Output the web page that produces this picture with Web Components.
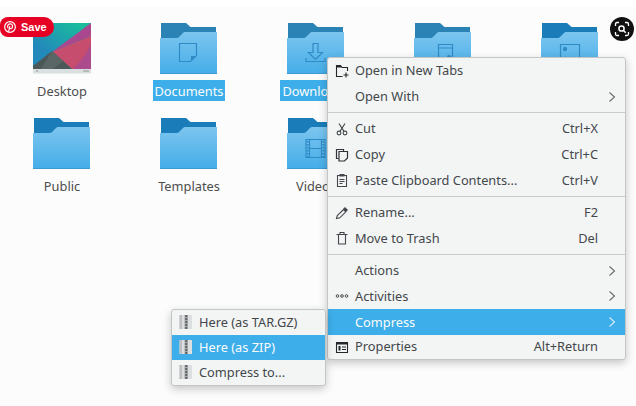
<!DOCTYPE html>
<html>
<head>
<meta charset="utf-8">
<style>
  html, body { margin: 0; width: 636px; height: 406px; overflow: hidden; background: #fff; }
</style>
</head>
<body>
<dolphin-view>
  <folder-item label="Desktop" kind="wallpaper"></folder-item>
  <folder-item label="Documents" kind="documents" selected></folder-item>
  <folder-item label="Downloads" kind="downloads" selected></folder-item>
  <folder-item label="Music" kind="music"></folder-item>
  <folder-item label="Pictures" kind="pictures" deep></folder-item>
  <folder-item label="Public" deep></folder-item>
  <folder-item label="Templates" deep></folder-item>
  <folder-item label="Videos" kind="videos" deep></folder-item>

  <pin-save slot="over"></pin-save>
  <lens-button slot="over"></lens-button>

  <popup-menu slot="over" style="left:327px;top:57px;width:299px;--row-h:25.800px;--last-h:23.500px">
    <menu-item icon="newtabs">Open in New Tabs</menu-item>
    <menu-item arrow>Open With</menu-item>
    <menu-sep></menu-sep>
    <menu-item icon="cut" keys="Ctrl+X">Cut</menu-item>
    <menu-item icon="copy" keys="Ctrl+C">Copy</menu-item>
    <menu-item icon="paste" keys="Ctrl+V">Paste Clipboard Contents...</menu-item>
    <menu-sep></menu-sep>
    <menu-item icon="rename" keys="F2">Rename...</menu-item>
    <menu-item icon="trash" keys="Del">Move to Trash</menu-item>
    <menu-sep></menu-sep>
    <menu-item arrow>Actions</menu-item>
    <menu-item icon="dots" arrow>Activities</menu-item>
    <menu-item arrow active>Compress</menu-item>
    <menu-item icon="props" keys="Alt+Return">Properties</menu-item>
  </popup-menu>

  <popup-menu slot="over" style="left:171px;top:308.500px;width:155px;--row-h:25px;--last-h:25px">
    <menu-item icon="zip">Here (as TAR.GZ)</menu-item>
    <menu-item icon="zip" active>Here (as ZIP)</menu-item>
    <menu-item icon="zip">Compress to...</menu-item>
  </popup-menu>
</dolphin-view>

<script>
// symbols drawn on the folder front, in folder coordinates
const M = '#2f8bc5';
const FOLDER_MARKS = {
  documents: `<path d="M19.500 21.500h17v12l-6 6h-11z" fill="none" stroke="${M}" stroke-width="1.200"/><path d="M31 39.500l5.500-5.500H31z" fill="${M}"/>`,
  downloads: `<path d="M26 21.500h5v9h4.500l-7 7-7-7H26z" fill="none" stroke="${M}" stroke-width="1.200"/><path d="M19 36v3.500h19V36" fill="none" stroke="${M}" stroke-width="1.200"/>`,
  music: `<path d="M24.500 22.500h14v20h-14z M24.500 26h14" fill="none" stroke="${M}" stroke-width="1.200"/><circle cx="35" cy="35" r="2" fill="${M}"/>`,
  pictures: `<path d="M19.500 22.500h19v20h-19z" fill="none" stroke="${M}" stroke-width="1.200"/><circle cx="24" cy="27" r="2.200" fill="${M}"/><circle cx="25" cy="36" r="1.200" fill="${M}"/><circle cx="32" cy="36" r="1.200" fill="${M}"/>`,
  videos: `<path d="M19 22.500h19v18H19z M22.500 22.500v18 M34.500 22.500v18 M22.500 31.500h12" fill="none" stroke="${M}" stroke-width="1.200"/><path d="M20.700 24v16 M36.300 24v16" stroke="${M}" stroke-width="1.800" stroke-dasharray="1.500 1.500"/>`
};

let gradId = 0;

class FolderItem extends HTMLElement {
  connectedCallback() {
    const kind = this.getAttribute('kind');
    const dark = this.hasAttribute('deep') ? '#1a7cb8' : '#2b82b5';
    const id = 'f' + (++gradId);
    const art = kind === 'wallpaper' ? `
      <svg width="58" height="52" viewBox="0 0 58 52">
        <defs><linearGradient id="${id}" x1="0.75" y1="0" x2="0.05" y2="0.8">
          <stop offset="0" stop-color="#1abc9c"/><stop offset="0.75" stop-color="#2389bb"/>
        </linearGradient></defs>
        <rect y="1" width="58" height="47" fill="url(#${id})"/>
        <path d="M58 1 L19 30 L58 14z" fill="#a9478f"/>
        <path d="M58 14 V47 H39 L19 30z" fill="#c74d6e"/>
        <path d="M58 22 V47 H40 Q52 36 58 22z" fill="#ab4a8c"/>
        <path d="M0 44 L19 29 L39 47 H0z" fill="#4b5857"/>
        <path d="M19 29 L30 39 L20 47 H8z" fill="#596665"/>
        <rect y="47" width="58" height="4.500" fill="#dadfdf"/>
        <path d="M3 49h2 M50 49h6" stroke="#8f9595" stroke-width="1"/>
      </svg>` : `
      <svg width="58" height="52" viewBox="0 0 58 52">
        <defs><linearGradient id="${id}" x1="0" y1="0" x2="0" y2="1">
          <stop offset="0" stop-color="#7cc5ef"/><stop offset="1" stop-color="#44ade8"/>
        </linearGradient></defs>
        <path d="M1 1h25l4.500 4H56v12H1z" fill="${dark}"/>
        <path d="M0 16h17q1 0 2-1l4-4q1-1 2-1H57v42H0z" fill="url(#${id})"/>
        <rect y="51" width="57" height="1" fill="#3b93c8" opacity=".7"/>
        ${FOLDER_MARKS[kind] || ''}
      </svg>`;
    this.attachShadow({ mode: 'open' });
    this.shadowRoot.innerHTML = `
      <style>
        :host { display: flex; flex-direction: column; align-items: center; gap: 6px; }
        svg { display: block; }
        .label { padding: 0 2px; height: 21px; line-height: 22px; color: #4d4d4d; white-space: nowrap; }
        :host([selected]) .label { background: #3daee9; color: #fcfcfc; }
      </style>
      ${art}
      <div class="label">${this.getAttribute('label')}</div>
    `;
  }
}
customElements.define('folder-item', FolderItem);

class DolphinView extends HTMLElement {
  connectedCallback() {
    this.attachShadow({ mode: 'open' });
    this.shadowRoot.innerHTML = `
      <style>
        :host {
          display: block;
          position: relative;
          width: 636px;
          height: 406px;
          font: 12.800px "Noto Sans", sans-serif;
          overflow: hidden;
        }
        .view {
          margin-top: 7px;
          height: 399px;
          box-sizing: border-box;
          background: #fcfcfc;
          padding: 15px 0 0 7px;
          display: grid;
          grid-template-columns: repeat(5, 110px);
          grid-auto-rows: 79px;
          column-gap: 17px;
          row-gap: 16px;
        }
      </style>
      <div class="view"><slot></slot></div>
      <slot name="over"></slot>
    `;
  }
}
customElements.define('dolphin-view', DolphinView);

class PopupMenu extends HTMLElement {
  connectedCallback() {
    this.attachShadow({ mode: 'open' });
    this.shadowRoot.innerHTML = `
      <style>
        :host {
          display: flex;
          flex-direction: column;
          position: absolute;
          box-sizing: border-box;
          background: #f3f5f5;
          border: 1px solid #c3c6c7;
          border-radius: 3px;
          box-shadow: 0 3px 9px rgba(0, 0, 0, 0.22);
          color: #43474b;
        }
      </style>
      <slot></slot>
    `;
  }
}
customElements.define('popup-menu', PopupMenu);

const c = 'currentColor';
const MENU_ICONS = {
  newtabs: `<path d="M8.500 13.500h-6V2.500h4l1.500 2h5.500V8" fill="none" stroke="#23272a" stroke-width="1.100"/><path d="M2.500 2.500h4l1 2h-5z" fill="#23272a"/><path d="M12 9.500v5 M9.500 12h5" stroke="#23272a" stroke-width="1.100"/>`,
  cut: `<circle cx="5" cy="12" r="1.900" fill="none" stroke="${c}" stroke-width="1.100"/><circle cx="11" cy="12" r="1.900" fill="none" stroke="${c}" stroke-width="1.100"/><path d="M6 10.400L11 2.500 M10 10.400L5 2.500" stroke="${c}" stroke-width="1.100"/>`,
  copy: `<path d="M4.500 11.500h-2v-9h7v2" fill="none" stroke="#2f3337" stroke-width="1.200"/><path d="M5 4.500h8.500v6.500l-3 3H5z" fill="none" stroke="#2f3337" stroke-width="1.200"/>`,
  paste: `<path d="M3.500 3.500h9v11h-9z" fill="none" stroke="${c}" stroke-width="1.100"/><path d="M5.500 2h5v2.500h-5z" fill="${c}"/><path d="M5.500 7.500h5 M5.500 9.500h5 M5.500 11.500h3" stroke="${c}" stroke-width="1"/>`,
  rename: `<path d="M2.500 13.500l.8-3L9.500 4.500l2.300 2.300-6 6z" fill="none" stroke="${c}" stroke-width="1.100"/><path d="M9 4l2-2 3 3-2 2z" fill="${c}"/>`,
  trash: `<path d="M2.500 4.500h11 M6 4.500V2.500h4v2 M4.500 4.500v9.500h7V4.500" fill="none" stroke="${c}" stroke-width="1.100"/>`,
  dots: `<circle cx="3.500" cy="8" r="1.300" fill="none" stroke="${c}"/><circle cx="8" cy="8" r="1.300" fill="none" stroke="${c}"/><circle cx="12.500" cy="8" r="1.300" fill="none" stroke="${c}"/>`,
  props: `<path d="M2.500 3.500h11v10h-11z" fill="none" stroke="#23272a" stroke-width="1.100"/><path d="M2 3h12v2.500H2z" fill="#23272a"/><path d="M4.500 7h2v4.500h-2z" fill="#23272a"/><path d="M8 8h4 M8 10.500h4" stroke="#23272a" stroke-width="1"/>`,
  zip: `<rect x="1.500" y="1" width="12.500" height="14" fill="#dcdedf"/><rect x="1.500" y="1" width="2.500" height="14" fill="#bcbfc1"/><rect x="6.500" y="1" width="3.500" height="14" fill="#a4a8aa"/><path d="M8.200 1v14" stroke="#63676a" stroke-width="2" stroke-dasharray="2 1"/>`
};

class MenuItem extends HTMLElement {
  connectedCallback() {
    const icon = MENU_ICONS[this.getAttribute('icon')] || '';
    const keys = this.getAttribute('keys') || '';
    this.attachShadow({ mode: 'open' });
    this.shadowRoot.innerHTML = `
      <style>
        :host {
          display: grid;
          grid-template-columns: 16px 1fr auto 27px;
          align-items: center;
          height: var(--row-h);
          padding-left: 6px;
          box-sizing: border-box;
          white-space: nowrap;
        }
        :host(:last-child) { height: var(--last-h); }
        :host([active]) { background: #3daee9; color: #fcfcfc; }
        svg { display: block; }
        .text { margin-left: 5px; padding-bottom: 1px; }
        .keys { text-align: right; padding-bottom: 1px; }
        .arrow { justify-self: center; }
      </style>
      <svg width="16" height="16" viewBox="0 0 16 16">${icon}</svg>
      <span class="text"><slot></slot></span>
      <span class="keys">${keys}</span>
      ${this.hasAttribute('arrow')
        ? `<svg class="arrow" width="8" height="12" viewBox="0 0 8 12"><path d="M1.500 1.500L6.500 6l-5 4.500" fill="none" stroke="currentColor" stroke-opacity=".8" stroke-width="1.100"/></svg>`
        : '<span></span>'}
    `;
  }
}
customElements.define('menu-item', MenuItem);

class MenuSep extends HTMLElement {
  connectedCallback() {
    this.attachShadow({ mode: 'open' });
    this.shadowRoot.innerHTML = `
      <style>
        :host { display: flex; align-items: center; height: 6.400px; }
        div { flex: 1; height: 1px; background: #c9cccd; }
      </style>
      <div></div>
    `;
  }
}
customElements.define('menu-sep', MenuSep);

class PinSave extends HTMLElement {
  connectedCallback() {
    this.attachShadow({ mode: 'open' });
    this.shadowRoot.innerHTML = `
      <style>
        :host {
          position: absolute;
          left: 0;
          top: 17px;
          width: 54px;
          height: 20px;
          display: flex;
          align-items: center;
          gap: 5px;
          padding-left: 4px;
          box-sizing: border-box;
          background: #e60023;
          border-radius: 8px 10px 10px 8px;
          color: #fff;
          font: bold 11px "Liberation Sans", sans-serif;
        }
        svg { display: block; }
      </style>
      <svg width="12" height="12" viewBox="0 0 13 13">
        <circle cx="6.500" cy="6.500" r="5.800" fill="none" stroke="#fff" stroke-width="1.300"/>
        <path d="M5 11.500L6.300 5.500 M4.300 7.500C3 4.800 5 3 7 3.200c2 .2 2.700 2 2 3.800-.6 1.500-2.300 1.800-3 .6" fill="none" stroke="#fff" stroke-width="1.300"/>
      </svg>
      <span>Save</span>
    `;
  }
}
customElements.define('pin-save', PinSave);

class LensButton extends HTMLElement {
  connectedCallback() {
    this.attachShadow({ mode: 'open' });
    this.shadowRoot.innerHTML = `
      <style>
        :host {
          position: absolute;
          left: 610px;
          top: 17px;
          width: 24px;
          height: 24px;
          display: flex;
          align-items: center;
          justify-content: center;
          background: #111;
          border-radius: 50%;
        }
        svg { display: block; }
      </style>
      <svg width="16" height="16" viewBox="0 0 16 16" fill="none" stroke="#fff" stroke-width="1.300">
        <path d="M1.500 5V3q0-1.500 1.500-1.500h2 M11 1.500h2q1.500 0 1.500 1.500v2 M14.500 11v2q0 1.500-1.500 1.500h-2 M5 14.500H3q-1.500 0-1.500-1.500v-2"/>
        <circle cx="7.500" cy="7.500" r="2.600" stroke-width="1.500"/>
        <path d="M9.500 9.500l2.200 2.200" stroke-width="1.500"/>
      </svg>
    `;
  }
}
customElements.define('lens-button', LensButton);
</script>
</body>
</html>
